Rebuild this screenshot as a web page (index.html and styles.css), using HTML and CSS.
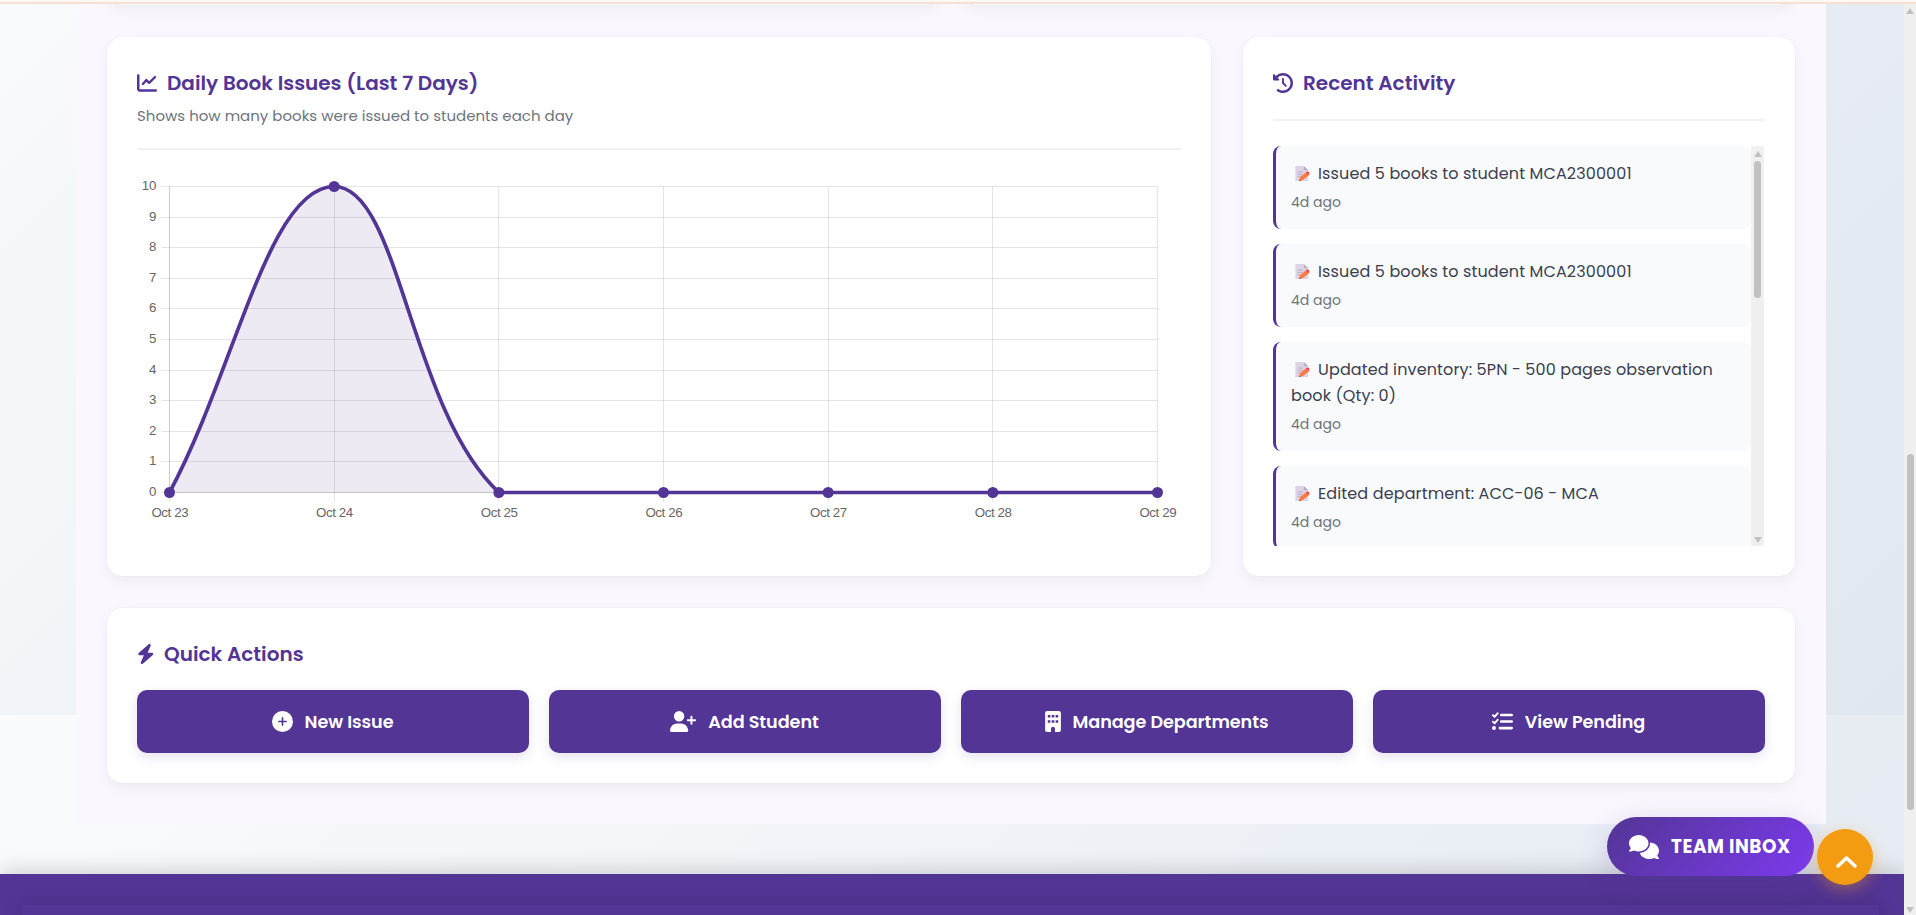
FILE: index.html
```html
<!DOCTYPE html>
<html lang="en">
<head>
<meta charset="utf-8">
<title>Library Dashboard</title>
<link rel="stylesheet" href="styles.css">
</head>
<body>
<div class="topbar"></div>
<div class="viewport">
  <div class="page">
    <main class="wrapper">
      <div class="prev-row"><div class="card prev-card"></div><div class="card prev-card"></div></div>
      <div class="row">
        <section class="card chart-card">
          <header class="card-head">
            <h2 class="title"><svg class="ico-title" viewBox="0 0 512 512"><path d="M64 64c0-17.700-14.300-32-32-32S0 46.300 0 64v336c0 44.200 35.800 80 80 80h400c17.700 0 32-14.300 32-32s-14.300-32-32-32H80c-8.800 0-16-7.200-16-16z"/><path d="M150 280l90-98 72 70 150-150" fill="none" stroke="currentColor" stroke-width="60" stroke-linecap="round" stroke-linejoin="round"/></svg><span>Daily Book Issues (Last 7 Days)</span></h2>
            <p class="subtitle">Shows how many books were issued to students each day</p>
          </header>
          <svg class="chart" viewBox="137 170 1044 355">
            <g class="grid" id="grid"></g>
            <path class="area" d="M169.500 492.500C235.400 370.100 268.300 186.500 334.200 186.500C400 186.500 409.500 409.500 498.900 492.500Z"/>
            <path class="line" d="M169.500 492.500C235.400 370.100 268.300 186.500 334.200 186.500C400 186.500 409.500 409.500 498.900 492.500H1157.500"/>
            <g class="dots" id="dots"></g>
            <g class="labels" id="labels"></g>
          </svg>
        </section>
        <section class="card activity-card">
          <header class="card-head">
            <h2 class="title"><svg class="ico-title" viewBox="0 0 512 512"><path d="M75 75L41 41C25.900 25.900 0 36.600 0 57.900V168c0 13.300 10.700 24 24 24h110.100c21.400 0 32.100-25.900 17-41l-30.800-30.800C155 85.500 203 64 256 64c106 0 192 86 192 192s-86 192-192 192c-40.800 0-78.600-12.700-109.700-34.400-14.500-10.100-34.400-6.600-44.600 7.900s-6.600 34.400 7.900 44.600C151.200 495 201.700 512 256 512c141.400 0 256-114.600 256-256S397.400 0 256 0C185.300 0 121.300 28.700 75 75zm181 53c-13.300 0-24 10.700-24 24v104c0 6.400 2.500 12.500 7 17l72 72c9.400 9.400 24.600 9.400 33.900 0s9.400-24.600 0-33.900l-65-65V152c0-13.300-10.700-24-24-24z"/></svg><span>Recent Activity</span></h2>
          </header>
          <div class="feed">
            <ul class="feed-list">
              <li class="item"><p class="msg"><svg class="memo" viewBox="0 0 16 18"><use href="#memo"/></svg>Issued 5 books to student MCA2300001</p><p class="time">4d ago</p></li>
              <li class="item"><p class="msg"><svg class="memo" viewBox="0 0 16 18"><use href="#memo"/></svg>Issued 5 books to student MCA2300001</p><p class="time">4d ago</p></li>
              <li class="item"><p class="msg"><svg class="memo" viewBox="0 0 16 18"><use href="#memo"/></svg>Updated inventory: 5PN - 500 pages observation<br>book (Qty: 0)</p><p class="time">4d ago</p></li>
              <li class="item"><p class="msg"><svg class="memo" viewBox="0 0 16 18"><use href="#memo"/></svg>Edited department: ACC-06 - MCA</p><p class="time">4d ago</p></li>
            </ul>
            <div class="track feed-track"><i class="up"></i><b class="thumb"></b><i class="down"></i></div>
          </div>
        </section>
      </div>
      <section class="card actions-card">
        <h2 class="title"><svg class="ico-bolt" viewBox="0 0 448 512"><path d="M349.400 44.600c5.900-13.700 1.500-29.700-10.600-38.500s-28.600-8-39.900 1.800l-256 224C33 240.700 29.300 254.900 34 267.300S50.700 288 64 288h111.500L98.600 467.400c-5.900 13.700-1.500 29.700 10.600 38.500s28.600 8 39.900-1.800l256-224c10-8.700 13.600-22.900 8.900-35.300S397.300 224 384 224H272.500z"/></svg><span>Quick Actions</span></h2>
        <div class="buttons">
          <button class="btn"><svg class="i20" viewBox="0 0 512 512"><path fill-rule="evenodd" d="M256 0a256 256 0 1 0 0 512 256 256 0 1 0 0-512zM236 344v-68h-68c-27 0-27-40 0-40h68v-68c0-27 40-27 40 0v68h68c27 0 27 40 0 40h-68v68c0 27-40 27-40 0z"/></svg><span>New Issue</span></button>
          <button class="btn"><svg class="i26" viewBox="0 0 640 512"><path d="M96 128a128 128 0 1 1 256 0 128 128 0 1 1-256 0zM0 482.300C0 383.800 79.800 304 178.300 304h91.400C368.200 304 448 383.800 448 482.300c0 16.400-13.300 29.700-29.700 29.700H29.700C13.300 512 0 498.700 0 482.300zM504 312v-64h-64c-32 0-32-48 0-48h64v-64c0-32 48-32 48 0v64h64c32 0 32 48 0 48h-64v64c0 32-48 32-48 0z"/></svg><span>Add Student</span></button>
          <button class="btn"><svg class="i16" viewBox="0 0 384 512"><path fill-rule="evenodd" d="M48 0C21.500 0 0 21.500 0 48v416c0 26.500 21.500 48 48 48h96v-80c0-26.500 21.500-48 48-48s48 21.500 48 48v80h96c26.500 0 48-21.500 48-48V48c0-26.500-21.500-48-48-48zM64 224h64v64H64zM160 224h64v64h-64zM256 224h64v64h-64zM64 96h64v64H64zM160 96h64v64h-64zM256 96h64v64h-64z"/></svg><span>Manage Departments</span></button>
          <button class="btn"><svg class="i20" viewBox="0 0 512 512"><g fill="none" stroke="currentColor" stroke-linecap="round" stroke-linejoin="round"><path stroke-width="48" d="M24 104l40 36 72-84M24 264l40 36 72-84"/><path stroke-width="64" d="M224 96h256M224 256h256M192 416h288"/></g><circle cx="48" cy="416" r="48"/></svg><span>View Pending</span></button>
        </div>
      </section>
    </main>
    <footer class="footer"><div class="footer-inner"></div></footer>
  </div>
  <div class="track page-track"><i class="up"></i><b class="thumb"></b><i class="down"></i></div>
</div>
<a class="inbox"><svg class="chat" viewBox="0 0 640 512"><path d="M208 352c114.900 0 208-78.800 208-176S322.900 0 208 0 0 78.800 0 176c0 38.600 14.700 74.300 39.600 103.400-3.500 9.400-8.700 17.700-14.200 24.700-4.800 6.200-9.700 11-13.300 14.300-1.800 1.600-3.300 2.900-4.300 3.700l-1.300.9C.6 327.200-1.300 334.400 1 340.900S9.100 352 16 352c21.800 0 43.800-5.600 62.100-12.500 9.200-3.500 17.800-7.400 25.200-11.400C134.100 343.300 169.800 352 208 352zM448 176c0 112.300-99.100 196.900-216.500 207C255.800 457.400 336.400 512 432 512c38.200 0 73.900-8.700 104.700-23.900 7.500 4 16 7.900 25.200 11.400 18.300 6.900 40.300 12.500 62.100 12.500 6.900 0 13.100-4.500 15.200-11.100 2.100-6.600-.2-13.800-5.800-17.900-8-5-21-18-32.900-43.400C625.300 410.300 640 374.600 640 336c0-92.800-84.900-168.900-192.600-175.500.4 5.100.6 10.300.6 15.500z"/></svg><span>TEAM INBOX</span></a>
<a class="to-top"><svg class="chev" viewBox="0 0 21 12"><path d="M2 10l8.500-8 8.500 8"/></svg></a>
<svg width="0" height="0" class="defs"><symbol id="memo" viewBox="0 0 16 18"><path fill="#ddd3e6" d="M1 1h9l4.500 4.500V17H1z"/><path fill="#b9adc4" d="M10 1l4.500 4.500H10z"/><path stroke="#b9adc4" d="M3.500 7.500H9M3.500 10H9M3.500 12.500h3"/><path fill="#ff7a3d" d="M5 17l1-4 6-5 3 3-6 5z"/><path fill="#f4453f" d="M12 8l1.300-1q1-.5 2 .5t.5 2L15 11z"/><path fill="#8b4a50" d="M5 17l.5-2 1.500 1.500z"/></symbol></svg>
<script src="chart.js"></script>
</body>
</html>
```
FILE: styles.css
```css
*{box-sizing:border-box;margin:0;padding:0}
html,body{height:100%}
body{height:915px;overflow:hidden;font-family:Poppins,Inter,"Open Sans",sans-serif;color:#333;display:flex;flex-direction:column}
svg{display:block;fill:currentColor;flex:none}
.defs{position:absolute}
.topbar{height:4px;background:#fff8f3;border-bottom:2px solid #f7dfd4;flex:none}
.viewport{display:flex;height:911px}
.page{width:1904px;height:911px;overflow:hidden;background:linear-gradient(135deg,#fafbfc 0%,#f3f7fa 25%,#e8edf4 65%,#e1e7ee 100%) 0 -200px/1904px 911px repeat-y;display:flex;flex-direction:column}
.wrapper{width:1750px;height:820px;margin-left:76px;padding:0 31px;background:#faf7fe;flex:none}
.card{background:#fff;border-radius:15px;box-shadow:0 5px 15px rgba(0,0,0,.05),0 0 1px rgba(0,0,0,.12)}
.prev-row{display:grid;grid-template-columns:1fr 1fr;gap:20px;height:33px}
.prev-card{height:30px;margin-top:-29px}
.row{display:grid;grid-template-columns:2fr 1fr;gap:32px;height:539px}
.chart-card,.activity-card{padding:30px}
.title{display:flex;align-items:center;height:31px;color:#533595;font-size:20px;font-weight:600;white-space:nowrap}
.card-head{border-bottom:2px solid #f1f1f1}
.chart-card .card-head{height:83px}
.activity-card .card-head{height:54px;margin-bottom:25px}
.ico-title{width:20px;height:20px;margin-right:10px}
.ico-bolt{width:17.500px;height:20px;margin-right:9.500px}
.subtitle{font-size:15px;line-height:24px;color:#6c757d;margin-top:6px;white-space:nowrap}
.chart{width:1044px;height:355px;margin-top:20px}
.grid path{fill:none;stroke:rgba(0,0,0,.1)}
.area{fill:rgba(83,53,149,.1)}
.line{fill:none;stroke:#533595;stroke-width:3.700}
.dots{fill:#533595}
.labels{font:13.300px "Liberation Sans",Arial,sans-serif;fill:#666}
.day{letter-spacing:-.4px}
.feed{display:flex;height:400px;overflow:hidden;margin-right:1px}
.feed-list{list-style:none;flex:1;display:flex;flex-direction:column;gap:15px}
.item{height:83px;padding:15px;border-left:3px solid #533595;border-radius:8px;background:#f9fafc;flex:none}
.item:nth-child(3){height:108.600px}
.msg{font-size:16px;line-height:25.600px;letter-spacing:.13px;color:#3a4050;white-space:nowrap}
.memo{display:inline-block;width:16px;height:17px;margin:0 8px 0 3px;vertical-align:-3px}
.time{margin-top:4.500px;font-size:14px;line-height:22.400px;color:#6c757d}
.track{background:#f0f0f0;display:flex;flex-direction:column;align-items:center}
.feed-track{width:13px;padding:5px 0 3px}
.up,.down{width:0;height:0;border:4px solid transparent}
.up{border-top:0;border-bottom:6px solid #c1c1c1}
.down{border-bottom:0;border-top:6px solid #c1c1c1;margin-top:auto}
.thumb{width:7px;border-radius:4px;background:#c1c1c1}
.feed-track .thumb{margin-top:4px;height:137px}
.page-track{width:12px;padding:4px 0 2px}
.page-track .thumb{margin-top:440px;height:356px}
.actions-card{margin-top:32px;height:175px;padding:30px}
.buttons{display:grid;grid-template-columns:repeat(4,1fr);gap:20px;margin-top:21px}
.btn{height:63px;border:0;border-radius:10px;background:#533595;color:#fff;font:600 17.600px Poppins,Inter,sans-serif;letter-spacing:-.05px;display:flex;align-items:center;justify-content:center;gap:12px;padding-right:1px;white-space:nowrap;box-shadow:0 4px 12px rgba(83,53,149,.15)}
.i20{width:21px;height:21px}
.i26{width:26px;height:21px}
.i16{width:16px;height:21px}
.footer{margin-top:50px;height:41px;background:#533595;box-shadow:0 -5px 20px rgba(0,0,0,.15);padding:31px 25px 0 22px;flex:none}
.footer-inner{height:60px;background:#533595;box-shadow:0 0 20px rgba(0,0,0,.15)}
.inbox{position:absolute;left:1607px;top:817px;width:207px;height:59px;border-radius:30px;background:linear-gradient(135deg,#533595,#7c3aed);box-shadow:0 8px 30px rgba(83,53,149,.2);color:#fff;display:flex;align-items:center;padding-left:22px;gap:12px;font-size:18.400px;font-weight:700;letter-spacing:.550px;white-space:nowrap}
.chat{width:30px;height:24px}
.to-top{position:absolute;left:1817px;top:829px;width:56px;height:56px;border-radius:50%;background:#f39c12;box-shadow:0 4px 15px rgba(243,156,18,.4);display:flex;justify-content:center;padding:27px 0 0 3px}
.chev{width:21px;height:12px;fill:none;stroke:#fff;stroke-width:3.500;stroke-linecap:round;stroke-linejoin:round}
```
FILE: chart.js
```js
const days = ['Oct 23', 'Oct 24', 'Oct 25', 'Oct 26', 'Oct 27', 'Oct 28', 'Oct 29'];
const issued = [0, 10, 0, 0, 0, 0, 0];
const left = 169.5, right = 1157.5, top0 = 186.5, bottom = 492.5;
const step = (right - left) / 6;
const unit = (bottom - top0) / 10;
let grid = '', dots = '', labels = '';
for (let v = 0; v <= 10; v++) {
  const y = Math.floor(bottom - v * unit) + 0.5;
  grid += `<path d="M161 ${y}H${right}"/>`;
  labels += `<text x="156.500" y="${y + 3.5}" text-anchor="end">${v}</text>`;
}
days.forEach((d, i) => {
  const x = left + i * step;
  grid += `<path d="M${Math.floor(x) + 0.5} ${top0}V502"/>`;
  dots += `<circle cx="${x}" cy="${bottom - issued[i] * unit}" r="5.500"/>`;
  labels += `<text class="day" x="${x + 0.3}" y="517" text-anchor="middle">${d}</text>`;
});
grid += `<path d="M${left} ${top0}V${bottom}M${left} ${bottom}H${right}"/>`;
document.getElementById('grid').innerHTML = grid;
document.getElementById('dots').innerHTML = dots;
document.getElementById('labels').innerHTML = labels;
```
